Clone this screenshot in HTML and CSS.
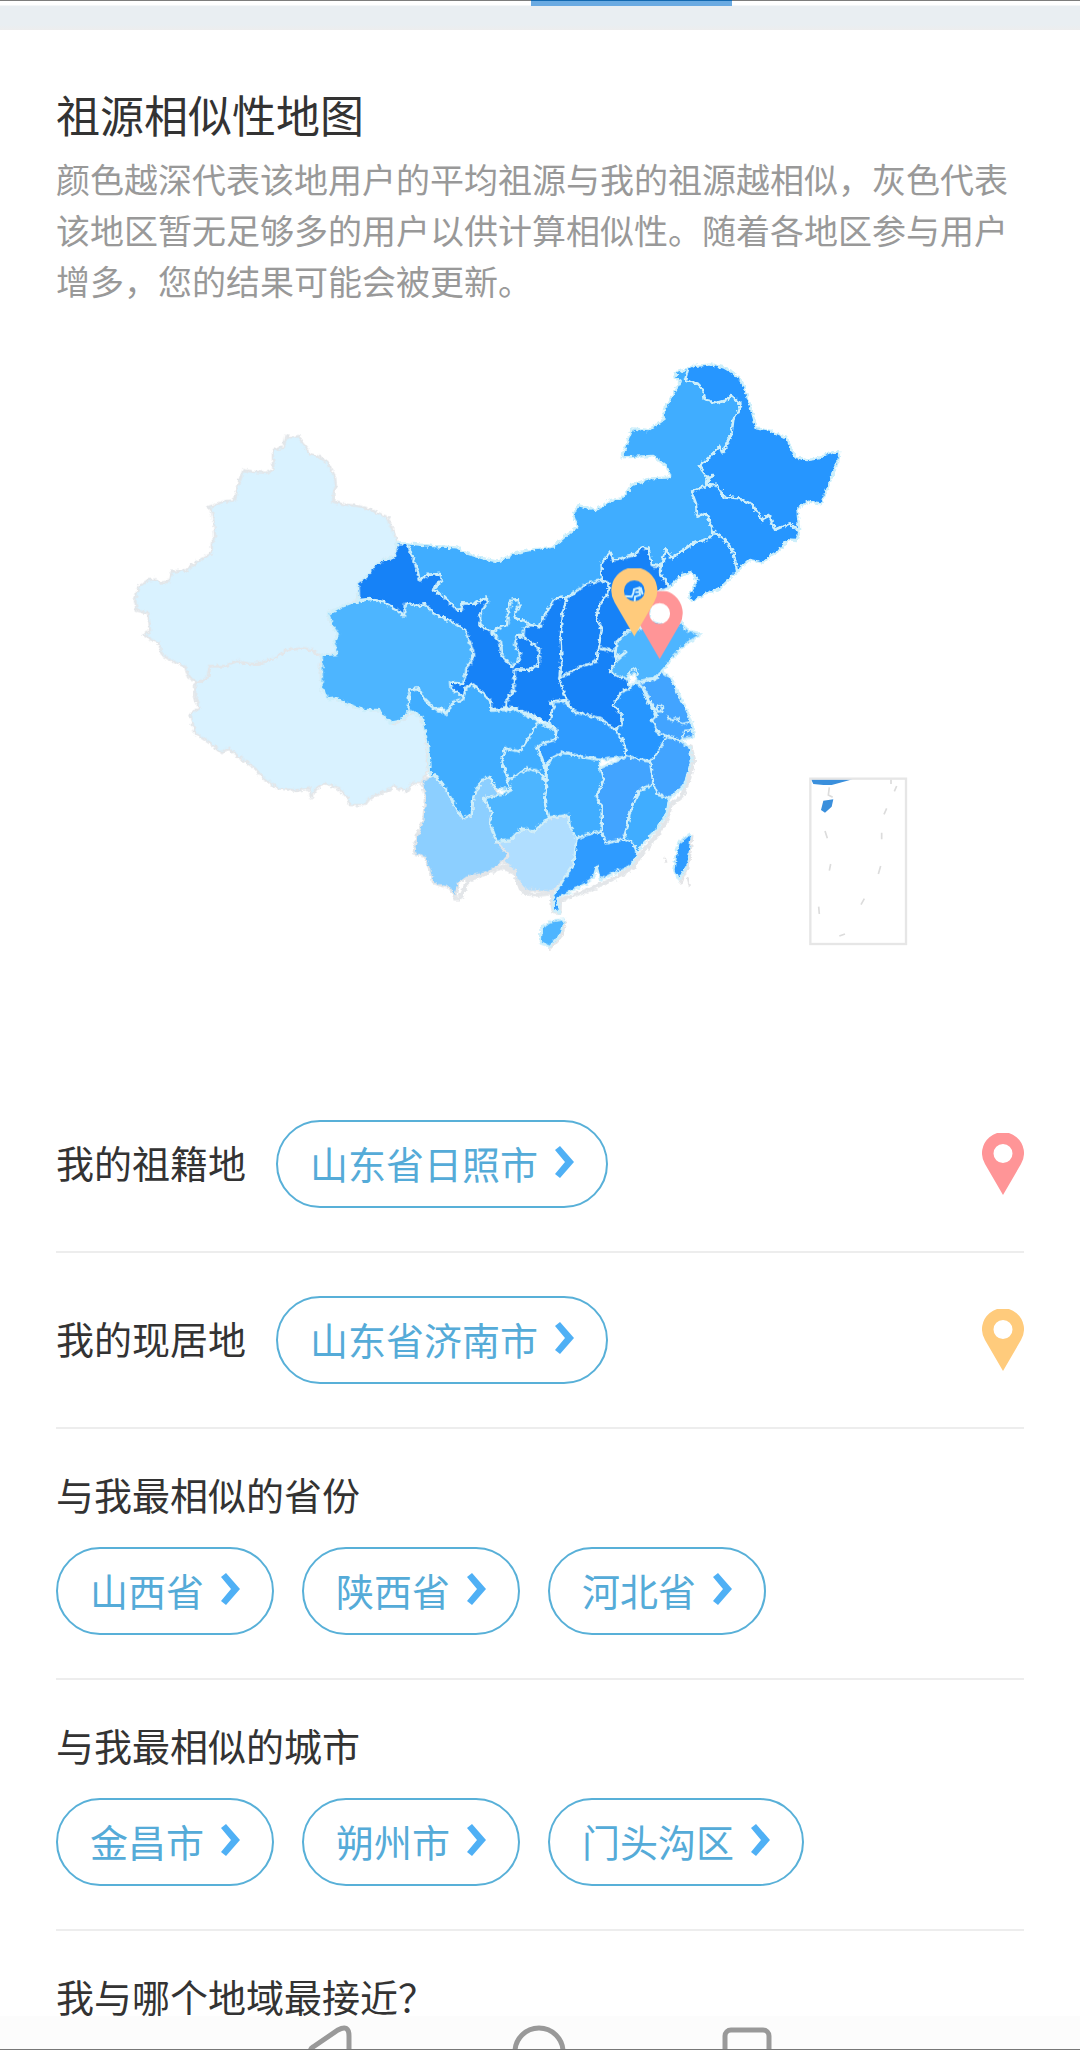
FILE: index.html
```html
<!DOCTYPE html>
<html lang="zh-CN">
<head>
<meta charset="utf-8">
<meta name="viewport" content="width=device-width, initial-scale=1">
<title>祖源相似性地图</title>
<link rel="stylesheet" href="styles.css">
</head>
<body>
<svg class="sprite" aria-hidden="true">
  <symbol id="pin" viewBox="0 0 42 62"><path fill-rule="evenodd" d="M21 62 3 31A21 21 0 1 1 39 31ZM21 11a9 9 0 1 0 0 19a9 9 0 1 0 0-19Z"/></symbol>
  <symbol id="chevron" viewBox="0 0 20 32"><path d="M1 4 6 0 20 16 6 32 1 28 11 16Z" fill="currentColor"/></symbol>
</svg>
<div class="tabs"><span class="tabs-active"></span></div>
<main class="page">
  <h1 class="title">祖源相似性地图</h1>
  <p class="intro">颜色越深代表该地用户的平均祖源与我的祖源越相似，灰色代表该地区暂无足够多的用户以供计算相似性。随着各地区参与用户增多，您的结果可能会被更新。</p>

  <svg class="map" viewBox="168 1020 2904 1860" role="img" aria-label="祖源相似性地图">
    <defs>
      <filter id="rough" x="-2%" y="-2%" width="104%" height="104%">
        <feTurbulence type="fractalNoise" baseFrequency="0.09" numOctaves="2" seed="4"/>
        <feDisplacementMap in="SourceGraphic" scale="16" xChannelSelector="R" yChannelSelector="G"/>
      </filter>
    </defs>
    <g class="land" filter="url(#rough)">
      <g class="coast">
        <path transform="translate(360 1260)" d="M270 738 320 738 350 722 380 730 410 732 465 715 500 690 550 684 575 690 605 706 600 740 608 810 630 835 660 838 700 858 750 870 780 870 800 895 825 912 860 890 880 875 900 885 915 930 920 980 925 1050 905 1090 880 1088 860 1115 820 1098 805 1110 750 1135 735 1155 690 1155 680 1130 655 1105 615 1090 590 1105 572 1135 570 1105 530 1112 475 1105 430 1075 405 1045 355 1010 325 985 305 1000 270 970 225 940 210 880 238 865 225 830 225 790 262 775Z" class="c0"/>
        <path transform="translate(360 1260)" d="M500 48 515 52 536 48 548 70 562 88 565 100 600 112 625 130 645 170 648 200 640 220 640 245 670 253 715 258 750 268 802 292 818 330 832 362 830 372 826 410 790 420 765 440 742 475 718 487 714 540 670 560 625 580 632 610 655 640 645 665 655 700 600 706 575 690 550 684 500 690 465 715 410 732 380 730 350 722 320 738 270 738 262 775 230 788 205 770 195 740 160 725 125 705 118 670 95 660 70 645 90 635 85 580 50 572 45 540 55 500 85 480 110 478 120 488 145 485 155 455 200 450 230 425 275 400 275 370 285 350 283 320 275 270 262 262 310 245 345 240 352 200 370 150 400 155 440 158 460 150 458 90 490 82Z" class="c0"/>
        <g transform="translate(1200 2040)">
          <path class="shore" d="M870 195 882 240 865 300 845 350 812 375 800 420 770 465 725 520 700 560 650 592 560 632 480 660 478 700 460 690 455 640 400 645 365 632 345 580 310 560 205 600 180 655 160 655"/>
          <path class="c2" d="M65 305 90 290 105 285 140 330 185 415 215 405 220 350 245 300 270 290 285 325 300 345 250 355 275 395 270 430 290 485 325 525 310 545 260 580 205 590 175 610 165 655 150 625 100 610 75 530 40 520 50 470 70 420 75 350Z"/>
          <path class="c1" d="M290 485 330 480 365 445 400 455 445 415 505 405 510 440 535 475 520 555 490 600 460 635 375 630 350 600 345 575 310 545 325 525Z"/>
        </g>
      </g>
      <g transform="translate(1680 1050)">
        <path class="c4" d="M-458 580-380 588-310 592-280 610-220 628-185 635-140 610-80 598-20 590 15 560 52 530 40 495 55 465 110 480 150 450 185 445 215 405 270 385 332 382 320 350 280 318 185 322 200 280 218 235 265 240 310 210 312 180 340 130 362 95 340 80 355 65 385 55 395 65 375 90 410 100 430 120 435 150 470 158 500 150 515 138 545 165 520 210 515 250 488 310 480 290 418 350 445 380 438 408 395 425 408 460 412 500 440 490 460 545 450 565 400 580 335 625 318 598 300 650 275 645 265 595 245 590 225 615 160 632 150 605 125 640 130 690 80 705 50 730 20 742-15 745-50 802-60 830-90 825-110 812-140 802-122 765-125 747-145 750-155 780-158 825-175 830-205 848-240 825-240 795-220 760-220 742-255 762-292 760-295 780-310 778-350 740-380 718-355 690-360 672-400 675-420 692-435 640Z"/>
        <path class="c6" d="M385 55 400 48 455 43 490 52 530 75 550 105 570 165 590 235 630 242 680 265 705 320 740 330 775 325 800 312 838 303 835 335 820 370 785 460 745 455 712 475 718 545 690 520 645 540 625 495 608 512 575 462 535 445 490 440 470 405 438 400 458 378 440 380 418 350 480 290 488 310 515 250 520 210 545 165 515 138 500 150 470 158 435 150 430 120 410 100 375 90Z"/>
        <path class="c6" d="M395 425 438 408 470 405 490 440 535 445 575 462 608 512 625 495 645 540 690 520 718 545 710 570 685 568 660 600 635 615 610 638 570 630 530 665 520 605 495 570 460 545 440 490 412 500 408 460Z"/>
        <path class="c6" d="M460 545 495 570 520 605 532 665 480 715 440 730 395 755 388 735 412 690 395 668 365 675 328 712 300 670 318 598 335 625 400 580 450 565Z"/>
      </g>
      <g transform="translate(900 1500)">
        <path class="c7" d="M290 130 322 130 345 190 360 242 380 225 420 222 425 240 400 268 430 290 470 328 485 330 488 310 525 312 560 292 560 310 540 345 540 375 575 398 600 425 605 465 635 500 650 490 660 460 645 435 650 405 670 410 718 445 716 495 690 510 645 508 645 560 620 600 615 620 600 630 575 630 570 600 545 578 520 550 500 560 495 590 490 590 452 565 450 548 490 550 500 505 522 465 508 425 495 390 440 358 400 340 375 312 350 318 316 308 312 350 290 330 255 308 210 297 178 300 174 248 200 230 225 195 250 180 285 172Z"/>
        <path class="c3" d="M85 340 120 322 165 306 210 297 255 308 290 330 312 350 316 308 350 318 375 312 400 340 440 358 495 390 508 425 522 465 500 505 490 550 450 548 452 565 490 590 480 610 460 618 440 640 425 622 400 625 375 600 355 565 330 568 325 590 332 620 320 645 300 662 270 668 235 630 190 630 150 615 110 595 85 598 65 565 65 465 112 462 100 425 115 405 95 375Z"/>
        <path class="c4" d="M578 395 605 380 622 375 625 330 635 300 655 297 658 315 640 352 670 362 690 375 668 405 650 405 645 435 660 460 655 485 635 500 605 465 600 425Z"/>
        <path class="c7" d="M690 375 720 380 730 352 765 295 800 292 795 340 785 380 785 470 778 535 790 570 800 600 750 604 765 620 760 645 748 675 720 655 680 640 650 625 615 622 620 600 640 575 645 508 690 510 716 495 718 445 670 410 672 385Z"/>
      </g>
      <g transform="translate(1500 1680)">
        <path class="c7" d="M305 10 330-25 340 2 405-15 425-40 445-35 455 15 480 20 480 40 508 82 460 100 450 150 440 190 385 212 350 245 345 275 295 262 305 210 288 170 300 130 325 100 325 70 305 60Z"/>
        <path class="c7" d="M325 70 325 100 300 130 288 170 305 210 295 262 290 305 240 320 180 355 185 300 182 240 185 170 200 115 240 85 260 72 305 60Z"/>
        <path class="c7" d="M295 262 345 275 350 300 332 330 345 345 385 355 390 385 365 395 340 435 365 460 365 495 345 508 300 475 220 455 195 410 178 355 240 320 290 305Z"/>
        <path class="c3" d="M385 212 425 205 440 190 462 185 510 205 545 185 560 210 605 222 560 250 520 290 485 335 470 350 410 365 405 340 385 345 385 358 345 345 332 330 350 300 380 275 345 290 350 245Z"/>
        <path class="c5" d="M485 335 515 355 530 390 560 450 575 490 582 530 540 540 500 530 475 520 455 480 470 465 440 400 430 385 410 370 470 355Z"/>
        <path class="c6" d="M405 365 430 385 440 420 470 465 455 480 475 520 500 530 490 565 470 580 450 605 380 590 370 545 345 508 365 495 365 460 340 435 365 395 390 385Z"/>
        <path class="c8" d="M150 425 195 425 220 455 300 475 345 508 370 545 380 590 300 600 250 590 190 575 150 600 135 620 115 560 115 550 165 540 170 510 148 490 155 455 165 440Z"/>
        <path class="line" d="M500 465 515 482 530 475 545 492 575 485M490 445a10 10 0 1 1-20 0a10 10 0 1 1 20 0M545 540 552 512 580 510M390 340a12 12 0 1 1 20 8"/>
      </g>
      <g transform="translate(1200 2040)">
        <path class="c4" d="M30 30 55 25 75 60 100 85 140 102 160 65 190 60 195 30 215 12 245 38 270 62 275 92 315 90 350 90 380 105 415 125 385 175 360 215 315 205 305 245 325 295 335 330 285 325 270 290 245 300 220 350 215 405 185 415 140 330 105 285 90 290 85 200 65 110 25 90Z"/>
        <path class="c3" d="M250 355 300 345 335 330 320 300 380 265 420 275 440 310 435 370 445 415 400 455 365 445 330 480 290 485 270 430 275 395Z"/>
        <path class="c4" d="M415 125 465 150 470 175 410 200 435 260 440 310 420 275 380 265 325 300 305 245 315 205 360 215 385 175Z"/>
        <path class="c5" d="M800 170 840 180 870 205 875 240 860 290 850 320 808 355 775 345 750 310 750 245 770 220Z"/>
        <path class="c5" d="M600 265 680 228 750 245 760 310 715 335 690 400 672 480 620 490 605 455 605 380 590 350 610 300Z"/>
        <path class="c4" d="M440 260 455 235 490 218 550 232 600 240 600 265 610 300 590 350 605 380 605 455 575 460 530 475 510 440 505 405 445 412 435 370 440 300Z"/>
        <path class="c4" d="M760 312 775 345 808 355 800 400 770 450 730 490 712 520 700 490 672 475 690 400 715 335Z"/>
        <path class="c8" d="M530 475 575 460 605 455 620 490 672 478 700 490 712 525 690 560 640 580 600 600 590 560 580 595 560 610 530 625 490 645 472 655 478 700 462 690 460 650 490 600 520 555Z"/>
        <path class="c3" d="M425 740 460 722 495 718 485 760 450 800 422 790Z"/>
        <path class="c8" d="M868 462 875 470 865 550 838 600 820 570 835 490Z"/>
        <path class="shore-thin" d="M878 465 868 550 840 612M497 722 488 765 450 806M795 535 800 548M862 590 870 620"/>
      </g>
    </g>
    <g transform="translate(2340 2280)">
      <path fill="#3a8fdc" d="M93 58H218L180 68 155 75 130 75 100 72ZM130 122 160 118 155 140 135 158 123 150Z"/>
      <path class="dash" d="M148 82 145 105 158 112M333 58V72M350 78 343 94M320 145 312 163M305 218V238M302 318 295 342M253 416 243 434M135 213 142 235M152 312 148 332M116 440 118 462M178 528 195 522"/>
      <rect class="frame" x="91" y="56" width="287" height="496"/>
    </g>
    <use href="#pin" class="pin-home" x="1908" y="1773" width="142" height="204"/>
    <path class="line" d="M1875 1788 1895 1790 1900 1780 1902 1768 1918 1763 1920 1785 1905 1790 1904 1806M1922 1762 1928 1784M1906 1776H1918"/>
    <use href="#pin" class="pin-live" x="1832" y="1705" width="142" height="204"/>
  </svg>

  <section class="row">
    <h2 class="label">我的祖籍地</h2>
    <button class="pill" type="button">山东省日照市<svg class="chevron"><use href="#chevron"/></svg></button>
    <svg class="pin pin-home"><use href="#pin"/></svg>
  </section>
  <section class="row">
    <h2 class="label">我的现居地</h2>
    <button class="pill" type="button">山东省济南市<svg class="chevron"><use href="#chevron"/></svg></button>
    <svg class="pin pin-live"><use href="#pin"/></svg>
  </section>
  <section class="group">
    <h2 class="label">与我最相似的省份</h2>
    <div class="pills">
      <button class="pill" type="button">山西省<svg class="chevron"><use href="#chevron"/></svg></button>
      <button class="pill" type="button">陕西省<svg class="chevron"><use href="#chevron"/></svg></button>
      <button class="pill" type="button">河北省<svg class="chevron"><use href="#chevron"/></svg></button>
    </div>
  </section>
  <section class="group">
    <h2 class="label">与我最相似的城市</h2>
    <div class="pills">
      <button class="pill" type="button">金昌市<svg class="chevron"><use href="#chevron"/></svg></button>
      <button class="pill" type="button">朔州市<svg class="chevron"><use href="#chevron"/></svg></button>
      <button class="pill" type="button">门头沟区<svg class="chevron"><use href="#chevron"/></svg></button>
    </div>
  </section>
  <section class="group group-last">
    <h2 class="label">我与哪个地域最接近？</h2>
  </section>
</main>
<nav class="navbar" aria-label="系统导航">
  <button class="nav-button" type="button" aria-label="返回"><svg viewBox="0 0 60 60"><path d="M11 31 36 14Q47 8 47 20V52Q46 60 37 55L11 38Q6 34 11 31Z"/></svg></button>
  <button class="nav-button" type="button" aria-label="主页"><svg viewBox="0 0 60 60"><circle cx="29" cy="36" r="24"/></svg></button>
  <button class="nav-button" type="button" aria-label="最近任务"><svg viewBox="0 0 60 60"><rect x="7" y="14" width="44" height="44" rx="6"/></svg></button>
</nav>
</body>
</html>
```
FILE: styles.css
```css
* { box-sizing: border-box; }

body {
  margin: 0;
  background: #fff;
  color: #333;
  font-family: "Noto Sans CJK SC", "Noto Sans", sans-serif;
}

.sprite { position: absolute; width: 0; height: 0; }

.tabs {
  display: grid;
  grid-template-columns: 531fr 201fr 348fr;
  height: 30px;
  border-top: 1px solid #7d7d7d;
  background: linear-gradient(#fff 4px, #e9eef2 5px, #e9eef2 24px, #ededee);
}

.tabs-active {
  grid-column: 2;
  height: 5px;
  background: #6aaae2;
  box-shadow: 0 -1px #1268b0;
}

.page { padding: 52px 56px 0; }

.title {
  margin: 0;
  font-size: 44px;
  font-weight: 400;
  line-height: 64px;
}

.intro {
  margin: 7px 0 0;
  color: #999;
  font-size: 34px;
  line-height: 51px;
}

.map {
  display: block;
  width: 100%;
  height: auto;
  margin: 34px 0 117px;
}

.land path { stroke: #cdeffb; stroke-width: 7; stroke-linejoin: round; }
.land .coast path { stroke: #e3e6e9; }
.land .shore, .land .shore-thin { fill: none; stroke: #e4e4e6; stroke-width: 13; }
.land .shore-thin { stroke-width: 6; }
.land .line, .line { fill: none; stroke: #cdeffb; stroke-width: 6; }
.c0 { fill: #d9f2ff; }
.c1 { fill: #b0deff; }
.c2 { fill: #8ccfff; }
.c3 { fill: #4eb5ff; }
.c4 { fill: #40adff; }
.c5 { fill: #42a4ff; }
.c6 { fill: #2596ff; }
.c7 { fill: #1982f7; }
.c8 { fill: #2e9bff; }
.dash { fill: none; stroke: #dcdcdc; stroke-width: 5; }
.frame { fill: none; stroke: #e6e6e6; stroke-width: 7; }

.pin-home { fill: #ff9597; }
.pin-live { fill: #ffcb7c; }

.row {
  display: flex;
  align-items: center;
  gap: 30px;
  padding: 43px 0;
  border-bottom: 2px solid #ededed;
}

.label {
  margin: 0;
  padding-bottom: 4px;
  font-size: 38px;
  font-weight: 400;
  line-height: 44px;
}

.pin { width: 42px; height: 62px; margin-left: auto; }

.group {
  display: flex;
  flex-direction: column;
  gap: 27px;
  padding: 43px 0;
  border-bottom: 2px solid #ededed;
}

.group-last { padding-bottom: 0; border-bottom: 0; }

.pills { display: flex; flex-wrap: wrap; gap: 28px; }

.pill {
  display: flex;
  align-items: center;
  gap: 16px;
  height: 88px;
  padding: 0 32px 4px;
  border: 2px solid #58b0d8;
  border-radius: 44px;
  background: #fff;
  color: #55abd8;
  font: inherit;
  font-size: 38px;
}

.chevron { width: 20px; height: 32px; color: #4fb0f5; }

.navbar {
  position: fixed;
  right: 0;
  bottom: 0;
  left: 0;
  display: flex;
  justify-content: center;
  gap: 148px;
  height: 34px;
  overflow: hidden;
  border-bottom: 1px solid #777;
  background: #fcfcfc;
}

.nav-button {
  width: 60px;
  height: 60px;
  padding: 0;
  border: 0;
  background: none;
}

.nav-button svg {
  display: block;
  width: 60px;
  height: 60px;
  fill: none;
  stroke: #999;
  stroke-width: 5;
}
```
